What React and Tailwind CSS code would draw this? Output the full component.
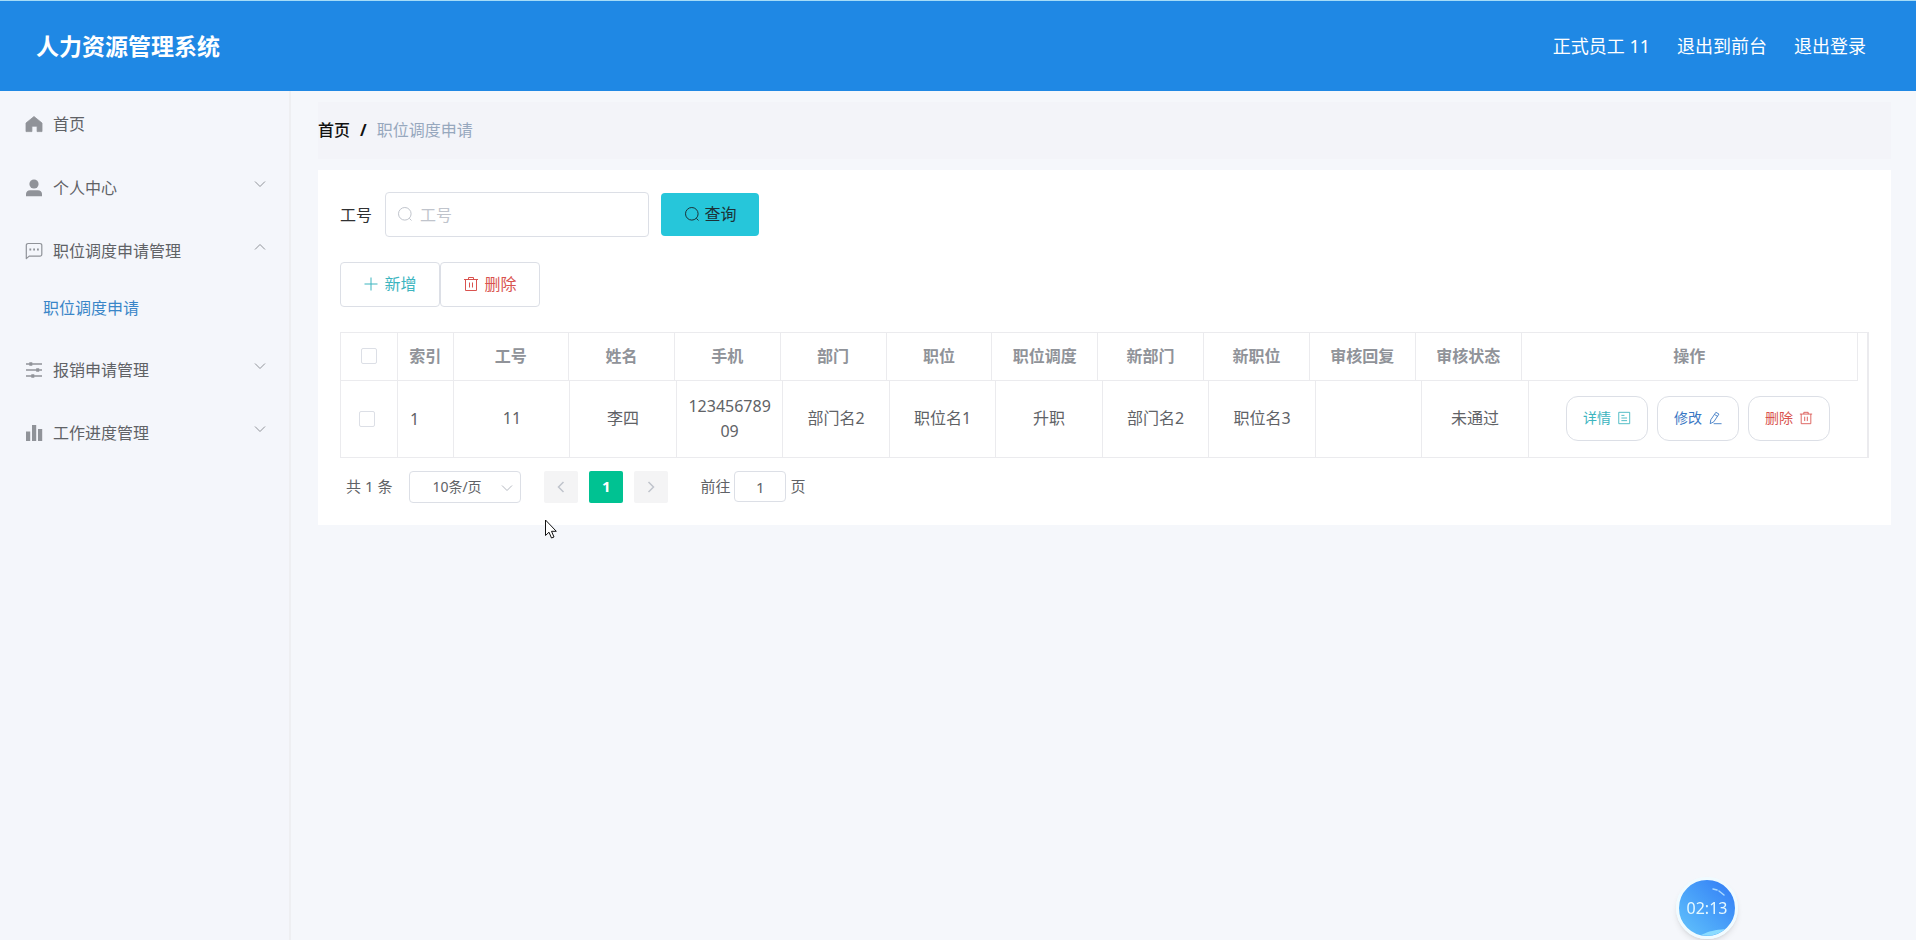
import { useState } from 'react'

const columns = ['工号', '姓名', '手机', '部门', '职位', '职位调度', '新部门', '新职位', '审核回复', '审核状态']

const rows = [
  ['11', '李四', '12345678909', '部门名2', '职位名1', '升职', '部门名2', '职位名3', '', '未通过'],
]

const HomeIcon = () => (
  <svg className="h-[18px] w-[18px]" viewBox="0 0 18 18" fill="currentColor">
    <path d="M9 1.5 17 8v8.6h-4.9v-5.4H6.9v5.4H1V8z" stroke="currentColor" strokeWidth="0.8" strokeLinejoin="round" />
  </svg>
)

const UserIcon = () => (
  <svg className="h-[18px] w-[18px]" viewBox="0 0 18 18" fill="currentColor">
    <circle cx="9" cy="5" r="4.6" />
    <path d="M1 17.3V15C1 12.600 2.800 11.200 5 11.200H13C15.200 11.200 17 12.600 17 15V17.300Z" />
  </svg>
)

const ChatIcon = () => (
  <svg className="h-[18px] w-[18px]" viewBox="0 0 18 18" fill="none" stroke="currentColor" strokeWidth="1.2">
    <path d="M1.300 16.600V3.300A1.800 1.800 0 0 1 3.100 1.500H15a1.800 1.800 0 0 1 1.800 1.800v9A1.800 1.800 0 0 1 15 14.100H4.200z" strokeLinejoin="round" />
    <path d="M4.400 7.500h1.800M8.200 7.500H10M12 7.500h1.800" strokeWidth="1.800" />
  </svg>
)

const SlidersIcon = () => (
  <svg className="h-[18px] w-[18px]" viewBox="0 0 18 18" fill="none" stroke="currentColor" strokeWidth="1.300">
    <path d="M1 3h16M1 9h16M1 15h16" />
    <path d="M5.800 1.200v3.600M12.700 7.200v3.600M7.800 13.200v3.600" strokeWidth="3" />
  </svg>
)

const ChartIcon = () => (
  <svg className="h-[18px] w-[18px]" viewBox="0 0 18 18" fill="currentColor">
    <path d="M1 7.500h4.200V17H1zM7 1h4.200v16H7zM13 5h4.200v12H13z" />
  </svg>
)

const Chevron = ({ className }) => (
  <svg className={className} viewBox="0 0 12 12" fill="none" stroke="currentColor" strokeWidth="1">
    <path d="M1 3.500l5 5 5-5" />
  </svg>
)

const SearchIcon = ({ className }) => (
  <svg className={className} viewBox="0 0 16 16" fill="none" stroke="currentColor" strokeWidth="1">
    <circle cx="7.800" cy="7.800" r="6.300" />
    <path d="M12.300 12.300l2.200 2.200" />
  </svg>
)

const PlusIcon = () => (
  <svg className="h-4 w-4" viewBox="0 0 16 16" fill="none" stroke="currentColor" strokeWidth="1">
    <path d="M8 1.500v13M1.500 8h13" />
  </svg>
)

const TrashIcon = ({ className }) => (
  <svg className={className} viewBox="0 0 16 16" fill="none" stroke="currentColor" strokeWidth="1">
    <path d="M1 3.500h14M5.500 3.500v-2h5v2M2.500 3.500v11h11v-11M6.500 6.500v5M9.500 6.500v5" />
  </svg>
)

const DocIcon = () => (
  <svg className="h-[14px] w-[14px]" viewBox="0 0 16 16" fill="none" stroke="currentColor" strokeWidth="1">
    <path d="M2 1.500h12.500v13H2zM5 5h3.500M5 8h6.500M5 11h6.500" />
  </svg>
)

const EditIcon = () => (
  <svg className="h-[14px] w-[14px]" viewBox="0 0 16 16" fill="none" stroke="currentColor" strokeWidth="1">
    <path d="M9 1.500l3.500 2-5.800 8.800-4.200 2.200.7-4.500zM7.500 4l3.400 2.100M6.500 14.500h9" />
  </svg>
)

const menu = [
  { label: '个人中心', icon: UserIcon },
  { label: '职位调度申请管理', icon: ChatIcon, children: ['职位调度申请'] },
  { label: '报销申请管理', icon: SlidersIcon },
  { label: '工作进度管理', icon: ChartIcon },
]

const Header = () => (
  <header className="flex h-[91px] items-center justify-between border-t border-[#a5dcf7] bg-[#1f88e4] pl-9 pr-[50px] text-white">
    <h1 className="text-[23px] font-bold">人力资源管理系统</h1>
    <nav className="flex items-center gap-[27px] text-lg">
      <span>正式员工 11</span>
      <a href="#front">退出到前台</a>
      <a href="#logout">退出登录</a>
    </nav>
  </header>
)

const Sidebar = () => {
  const [open, setOpen] = useState('职位调度申请管理')

  return (
    <aside className="w-[291px] shrink-0 border-r-2 border-[#eeeff2] bg-[#f4f6fb] text-base text-[#606266]">
      <a href="#home" className="flex h-[65px] items-center gap-[10px] pl-[25px]">
        <span className="text-[#909399]"><HomeIcon /></span>
        首页
      </a>
      {menu.map(({ label, icon: Icon, children }) => (
        <div key={label}>
          <button
            type="button"
            onClick={() => setOpen(open === label ? '' : label)}
            className="flex h-[63px] w-full items-center gap-[10px] pl-[25px] pr-[23px] text-[#909399]"
          >
            <Icon />
            <span className="text-[#606266]">{label}</span>
            <Chevron className={open === label ? 'mb-2 ml-auto h-3 w-3 rotate-180' : 'mb-2 ml-auto h-3 w-3'} />
          </button>
          {children && open === label && children.map((child) => (
            <a key={child} href="#transfer" className="flex h-14 items-center pb-1 pl-[43px] text-[#3a86c8]">
              {child}
            </a>
          ))}
        </div>
      ))}
    </aside>
  )
}

const Columns = () => (
  <colgroup>
    <col className="w-[3.7%]" />
    <col className="w-[3.7%]" />
    <col className="w-[7.6%]" />
    {columns.slice(1).map((name) => (
      <col key={name} className="w-[6.98%]" />
    ))}
    <col />
  </colgroup>
)

const Checkbox = ({ label }) => (
  <input
    type="checkbox"
    aria-label={label}
    className="block h-4 w-4 appearance-none rounded-[2px] border border-[#dcdfe6] bg-white checked:bg-[#00c292]"
  />
)

const RowButton = ({ className, children }) => (
  <button type="button" className={`flex h-[45px] items-center gap-[6px] rounded-xl border border-[#dcdfe6] px-4 pb-[2px] text-sm ${className}`}>
    {children}
  </button>
)

const DataTable = () => (
  <div className="border border-r-2 border-[#ebebee] text-base">
    <div className="pr-[9px]">
      <table className="w-full table-fixed border-collapse text-center text-[#909399]">
        <Columns />
        <thead>
          <tr className="h-[47px] border-b border-[#ebebee]">
            <th className="border-r border-[#ebebee] pl-5"><Checkbox label="全选" /></th>
            <th className="border-r border-[#ebebee]">索引</th>
            {columns.map((name) => (
              <th key={name} className="border-r border-[#ebebee]">{name}</th>
            ))}
            <th className="border-r border-[#ebebee]">操作</th>
          </tr>
        </thead>
      </table>
    </div>
    <table className="w-full table-fixed border-collapse text-center text-[#606266]">
      <Columns />
      <tbody>
        {rows.map((row, i) => (
          <tr key={i} className="h-[76px]">
            <td className="border-r border-[#ebebee] pl-[18px]"><Checkbox label="选择行" /></td>
            <td className="border-r border-[#ebebee] pl-3 text-left">{i + 1}</td>
            {row.map((cell, j) => (
              <td key={j} className="border-r border-[#ebebee] px-2 leading-[25px] break-all">{cell}</td>
            ))}
            <td>
              <div className="flex justify-center gap-[9px]">
                <RowButton className="text-[#3db5bf]">详情 <DocIcon /></RowButton>
                <RowButton className="text-[#3a78c4]">修改 <EditIcon /></RowButton>
                <RowButton className="text-[#d9534f]">删除 <TrashIcon className="h-[14px] w-[14px]" /></RowButton>
              </div>
            </td>
          </tr>
        ))}
      </tbody>
    </table>
  </div>
)

const Pagination = () => (
  <div className="mt-[13px] flex h-8 items-center pl-[6px] text-[15px] text-[#606266]">
    <span>共 1 条</span>
    <div className="relative ml-[17px]">
      <select aria-label="每页条数" className="h-8 w-28 appearance-none rounded-[4px] border border-[#dcdfe6] bg-white pl-[22px] text-sm">
        <option>10条/页</option>
        <option>20条/页</option>
      </select>
      <Chevron className="pointer-events-none absolute right-2 top-[11px] h-3 w-3 text-[#b4b8c0]" />
    </div>
    <div className="ml-[23px] flex gap-[11px]">
      <button type="button" aria-label="上一页" disabled className="flex h-8 w-[34px] items-center justify-center rounded-[2px] bg-[#f4f4f5] text-[#c0c4cc]">
        <svg className="h-3 w-3" viewBox="0 0 12 12" fill="none" stroke="currentColor" strokeWidth="1.500"><path d="M8.500 1 3.500 6l5 5" /></svg>
      </button>
      <button type="button" className="h-8 w-[34px] rounded-[2px] bg-[#00c292] font-bold text-white">1</button>
      <button type="button" aria-label="下一页" disabled className="flex h-8 w-[34px] items-center justify-center rounded-[2px] bg-[#f4f4f5] text-[#c0c4cc]">
        <svg className="h-3 w-3" viewBox="0 0 12 12" fill="none" stroke="currentColor" strokeWidth="1.500"><path d="M3.500 1l5 5-5 5" /></svg>
      </button>
    </div>
    <label htmlFor="page" className="ml-8">前往</label>
    <input id="page" type="text" defaultValue="1" className="mx-1 h-[31px] w-[52px] rounded-[4px] border border-[#dcdfe6] text-center" />
    <span>页</span>
  </div>
)

const App = () => {
  return (
    <div className="flex min-h-screen flex-col bg-[#f5f7fb] font-['Noto_Sans','Noto_Sans_CJK_SC',sans-serif]">
      <Header />
      <div className="flex flex-1">
        <Sidebar />
        <main className="min-w-0 flex-1 pl-[27px] pr-[25px] pt-[11px]">
          <nav className="flex h-[57px] items-center bg-[#f3f4f9] pb-[2px] text-base">
            <a href="#home" className="font-medium text-[#111111]">首页</a>
            <span className="mx-[10px] font-bold text-[#111111]">/</span>
            <span className="text-[#97a8be]">职位调度申请</span>
          </nav>

          <section className="mt-[11px] bg-white px-[22px] pb-[22px] pt-[22px]">
            <form className="flex items-center text-base" onSubmit={(e) => e.preventDefault()}>
              <label htmlFor="jobNo" className="text-[#303133]">工号</label>
              <div className="relative ml-[13px]">
                <SearchIcon className="absolute left-3 top-[14px] h-4 w-4 text-[#c0c4cc]" />
                <input
                  id="jobNo"
                  type="text"
                  placeholder="工号"
                  className="h-[45px] w-[264px] rounded-[4px] border border-[#dcdfe6] pl-[34px] placeholder:text-[#c0c4cc]"
                />
              </div>
              <button type="submit" className="ml-3 flex h-[43px] w-[98px] items-center justify-center gap-[5px] rounded-[4px] bg-[#26c6da] pb-[2px] text-[#1c3237]">
                <SearchIcon className="h-4 w-4" />
                查询
              </button>
            </form>

            <div className="mt-[25px] flex text-base">
              <button type="button" className="flex h-[45px] w-[100px] items-center justify-center gap-[5px] rounded-[4px] border border-[#dcdfe6] pb-[2px] text-[#3db5bf]">
                <PlusIcon />
                新增
              </button>
              <button type="button" className="flex h-[45px] w-[100px] items-center justify-center gap-[5px] rounded-[4px] border border-[#dcdfe6] pb-[2px] text-[#d9534f]">
                <TrashIcon className="h-4 w-4" />
                删除
              </button>
            </div>

            <div className="mt-[25px]">
              <DataTable />
              <Pagination />
            </div>
          </section>
        </main>
      </div>

      {/* mouse pointer */}
      <svg className="absolute left-[545px] top-[519px] h-5 w-3" viewBox="0 0 12 20" fill="#ffffff" stroke="#111111" strokeWidth="1">
        <path d="M.5 1v15.500l3.500-3.300 2.500 5.800 2.500-1-2.500-5.700h4.800z" />
      </svg>

      {/* recording timer */}
      <div className="fixed bottom-px right-[178px] flex h-[62px] w-[62px] items-center justify-center overflow-hidden rounded-full border-[3px] border-[#f0fbff] bg-linear-to-tr from-[#63c4fb] to-[#3379f5] text-base text-[#e6f9ff] shadow-md">
        <svg className="absolute inset-0 h-full w-full" viewBox="0 0 56 56" fill="none">
          <path d="M34 9l4 1M40 11l5 4" stroke="#a9d8ff" strokeWidth="1.500" strokeLinecap="round" />
          <path d="M22 55c8-4 14-5 24-6-6 6-15 8-24 6z" fill="#8bdcff" />
        </svg>
        <span className="relative">02:13</span>
      </div>
    </div>
  )
}

export default App
